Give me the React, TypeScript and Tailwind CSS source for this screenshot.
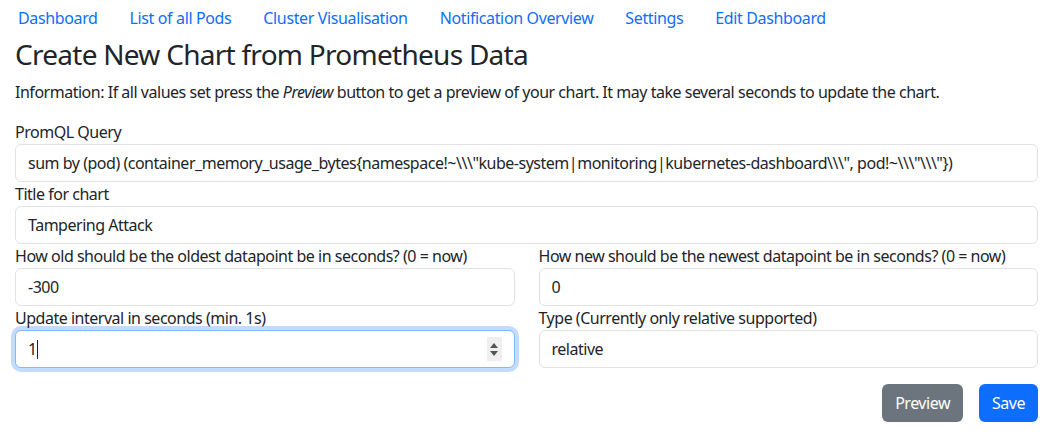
import React from 'react';

const links = [
  'Dashboard',
  'List of all Pods',
  'Cluster Visualisation',
  'Notification Overview',
  'Settings',
  'Edit Dashboard',
];

const inputCls =
  'block w-full h-[38px] px-3 border border-[#dee2e6] rounded-[6px] bg-white text-[16px] text-[#212529] tracking-[-0.03em] outline-none';

function Field({ label, value }: { label: string; value: string }) {
  return (
    <div className="min-w-0">
      <label className="block h-6 leading-6">{label}</label>
      <input className={inputCls} readOnly defaultValue={value} />
    </div>
  );
}

export default function App() {
  const query =
    'sum by (pod) (container_memory_usage_bytes{namespace!~\\\\\\"kube-system|monitoring|kubernetes-dashboard\\\\\\", pod!~\\\\\\"\\\\\\"})';
  return (
    <div
      className="bg-white text-[#212529] text-[16px] leading-6 tracking-[-0.03em] w-[1044px] h-[444px] overflow-hidden"
      style={{ fontFamily: '"Noto Sans", sans-serif' }}>
      <nav className="flex h-9 items-center pl-[2px] tracking-[-0.023em]">
        {links.map((l) =>
        <a key={l} href="#" className="px-4 text-[#0d6efd]">
            {l}
          </a>
        )}
      </nav>
      <div className="pl-[15px] pr-[6px]">
        <h2 className="text-[28px] leading-9 font-normal tracking-[-0.026em] mb-2">
          Create New Chart from Prometheus Data
        </h2>
        <p className="mb-4">
          Information: If all values set press the <i>Preview</i> button to get a preview of your
          chart. It may take several seconds to update the chart.
        </p>
        <Field label="PromQL Query" value={query} />
        <Field label="Title for chart" value="Tampering Attack" />
        <div className="grid grid-cols-2 gap-x-6">
          <Field
            label="How old should be the oldest datapoint be in seconds? (0 = now)"
            value="-300" />
          <Field
            label="How new should be the newest datapoint be in seconds? (0 = now)"
            value="0" />
          <div className="min-w-0">
            <label className="block h-6 leading-6">Update interval in seconds (min. 1s)</label>
            <div className="flex items-center h-[38px] pl-3 pr-3 border border-[#86b7fe] rounded-[6px] bg-white shadow-[0_0_0_4px_rgba(13,110,253,0.25)]">
              <span>1</span>
              <span className="w-px h-[19px] bg-[#212529]" />
              <span className="ml-auto flex flex-col items-center justify-center gap-[3px] w-[15px] h-6 bg-[#efefef]">
                <svg width="8" height="5" viewBox="0 0 8 5">
                  <path d="M0 5 L4 0 L8 5 Z" fill="#555" />
                </svg>
                <svg width="8" height="5" viewBox="0 0 8 5">
                  <path d="M0 0 L4 5 L8 0 Z" fill="#555" />
                </svg>
              </span>
            </div>
          </div>
          <Field label="Type (Currently only relative supported)" value="relative" />
        </div>
        <div className="flex justify-end gap-4 mt-4">
          <button className="h-[38px] px-[13px] rounded-[6px] bg-[#6c757d] text-white">Preview</button>
          <button className="h-[38px] px-[13px] rounded-[6px] bg-[#0d6efd] text-white">Save</button>
        </div>
      </div>
    </div>);

}
